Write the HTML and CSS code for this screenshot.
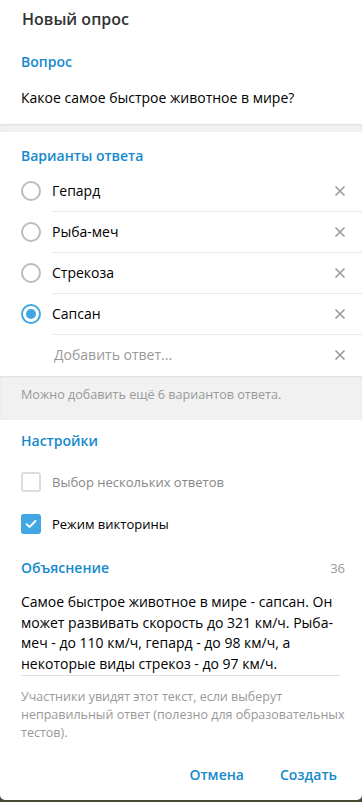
FILE: index.html
```html
<!DOCTYPE html>
<html lang="ru">
<head>
    <meta charset="UTF-8">
    <meta name="viewport" content="width=device-width, initial-scale=1.0">
    <title>Новый опрос</title>
    <link rel="stylesheet" href="styles.css">
</head>
<body>
    <div class="dialog">
        <div class="title">Новый опрос</div>

        <!-- Question -->
        <div class="label label-question">Вопрос</div>
        <div class="question">Какое самое быстрое животное в мире?</div>

        <div class="band"></div>

        <!-- Answers -->
        <div class="label label-answers">Варианты ответа</div>
        <div class="options">
            <div class="option">
                <span class="radio"></span>
                <span class="option-text">Гепард</span>
                <svg class="remove" width="12" height="12" viewBox="0 0 12 12"><path d="M1.5 1.5 L10.5 10.5 M10.5 1.5 L1.5 10.5" /></svg>
            </div>
            <div class="option">
                <span class="radio"></span>
                <span class="option-text">Рыба-меч</span>
                <svg class="remove" width="12" height="12" viewBox="0 0 12 12"><path d="M1.5 1.5 L10.5 10.5 M10.5 1.5 L1.5 10.5" /></svg>
            </div>
            <div class="option">
                <span class="radio"></span>
                <span class="option-text">Стрекоза</span>
                <svg class="remove" width="12" height="12" viewBox="0 0 12 12"><path d="M1.5 1.5 L10.5 10.5 M10.5 1.5 L1.5 10.5" /></svg>
            </div>
            <div class="option">
                <span class="radio checked"></span>
                <span class="option-text">Сапсан</span>
                <svg class="remove" width="12" height="12" viewBox="0 0 12 12"><path d="M1.5 1.5 L10.5 10.5 M10.5 1.5 L1.5 10.5" /></svg>
            </div>
            <div class="option option-add">
                <span class="radio-space"></span>
                <span class="option-text placeholder">Добавить ответ...</span>
                <svg class="remove" width="12" height="12" viewBox="0 0 12 12"><path d="M1.5 1.5 L10.5 10.5 M10.5 1.5 L1.5 10.5" /></svg>
            </div>
        </div>

        <div class="band band-text">Можно добавить ещё 6 вариантов ответа.</div>

        <!-- Settings -->
        <div class="label label-settings">Настройки</div>
        <div class="check-row">
            <span class="checkbox"></span>
            <span class="check-text disabled">Выбор нескольких ответов</span>
        </div>
        <div class="check-row">
            <span class="checkbox checked">
                <svg width="12" height="10" viewBox="0 0 12 10"><path d="M1.5 5.2 L4.5 8 L10.5 2" /></svg>
            </span>
            <span class="check-text">Режим викторины</span>
        </div>

        <!-- Explanation -->
        <div class="label label-explain">
            <span>Объяснение</span>
            <span class="counter">36</span>
        </div>
        <div class="explain">Самое быстрое животное в мире - сапсан. Он может развивать скорость до 321 км/ч. Рыба-меч - до 110 км/ч, гепард - до 98 км/ч, а некоторые виды стрекоз - до 97 км/ч.</div>
        <div class="hint">Участники увидят этот текст, если выберут неправильный ответ (полезно для образовательных тестов).</div>

        <!-- Buttons -->
        <div class="buttons">
            <button type="button">Отмена</button>
            <button type="button">Создать</button>
        </div>
    </div>
</body>
</html>
```

FILE: styles.css
```css
body {
    margin: 0;
    background-color: #464b35;
    font-family: "Open Sans", "Noto Sans", sans-serif;
    color: #000;
}

.dialog {
    width: 362px;
    height: 800px;
    background-color: #fff;
    border-radius: 0 0 5px 5px;
    overflow: hidden;
}

.title {
    height: 40px;
    line-height: 38px;
    padding-left: 22px;
    font-size: 16px;
    font-weight: 600;
    color: #333;
}

/* Blue section headers */
.label {
    height: 20px;
    line-height: 20px;
    padding: 0 21px;
    font-size: 14px;
    font-weight: 600;
    color: #168acd;
}

.label-question {
    margin-top: 12px;
}

.question {
    padding: 16px 21px 16px;
    line-height: 20px;
    font-size: 14px;
}

/* Grey separator strip */
.band {
    height: 8px;
    background-color: #f1f1f1;
    box-shadow: inset 0 1px 2px rgba(0, 0, 0, 0.08);
}

.band-text {
    height: 24px;
    padding: 10px 21px;
    line-height: 18px;
    font-size: 12.6px;
    color: #999;
}

.label-answers {
    margin-top: 14px;
}

.options {
    margin-top: 5px;
}

/* Answer rows */
.option {
    position: relative;
    display: flex;
    align-items: flex-start;
    height: 41px;
    padding-left: 21px;
}

.option-text {
    flex: 1;
    height: 40px;
    line-height: 40px;
    margin-left: 11px;
    font-size: 14px;
    border-bottom: 1px solid #e8e8e8;
}

.option .radio,
.option .radio-space {
    margin-top: 10px;
}

.option .remove {
    position: absolute;
    right: 16px;
    top: 14px;
}

.option-add .option-text {
    border-bottom: none;
    margin-left: 13px;
}

.placeholder {
    color: #999;
}

.radio,
.radio-space {
    width: 20px;
    height: 20px;
    box-sizing: border-box;
    flex-shrink: 0;
}

.radio {
    border: 2px solid #bcbcbc;
    border-radius: 50%;
}

.radio.checked {
    border-color: #40a7e3;
    position: relative;
}

.radio.checked::after {
    content: "";
    position: absolute;
    top: 3px;
    left: 3px;
    width: 10px;
    height: 10px;
    border-radius: 50%;
    background-color: #40a7e3;
}

.remove path {
    stroke: #9a9a9a;
    stroke-width: 1.6;
    fill: none;
}

.label-settings {
    margin-top: 11px;
}

/* Checkbox rows */
.check-row {
    display: flex;
    align-items: center;
    height: 42px;
    padding-left: 21px;
}

.label-settings + .check-row {
    margin-top: 10px;
}

.checkbox {
    width: 20px;
    height: 20px;
    box-sizing: border-box;
    border: 2px solid #dcdcdc;
    border-radius: 3px;
    display: flex;
    align-items: center;
    justify-content: center;
}

.checkbox.checked {
    border-color: #40a7e3;
    background-color: #40a7e3;
}

.checkbox path {
    stroke: #fff;
    stroke-width: 1.8;
    fill: none;
    stroke-linecap: round;
    stroke-linejoin: round;
}

.check-text {
    margin-left: 11px;
    font-size: 13px;
}

.check-text.disabled {
    color: #888;
}

.label-explain {
    display: flex;
    justify-content: space-between;
    margin-top: 13px;
    padding-right: 17px;
}

.counter {
    font-weight: normal;
    font-size: 13px;
    color: #999;
}

.explain {
    margin: 14px 22px 0 21px;
    padding-bottom: 1px;
    line-height: 20.5px;
    font-size: 14px;
    border-bottom: 1px solid #e0e0e0;
}

.hint {
    padding: 12px 8px 0 21px;
    line-height: 18px;
    font-size: 12.5px;
    color: #999;
}

.buttons {
    display: flex;
    justify-content: flex-end;
    gap: 16px;
    margin-top: 14px;
    padding-right: 15px;
}

button {
    height: 36px;
    padding: 0 10px;
    border: none;
    background: none;
    font-family: "Open Sans", "Noto Sans", sans-serif;
    font-size: 14px;
    font-weight: 600;
    color: #168acd;
    cursor: pointer;
}
```
